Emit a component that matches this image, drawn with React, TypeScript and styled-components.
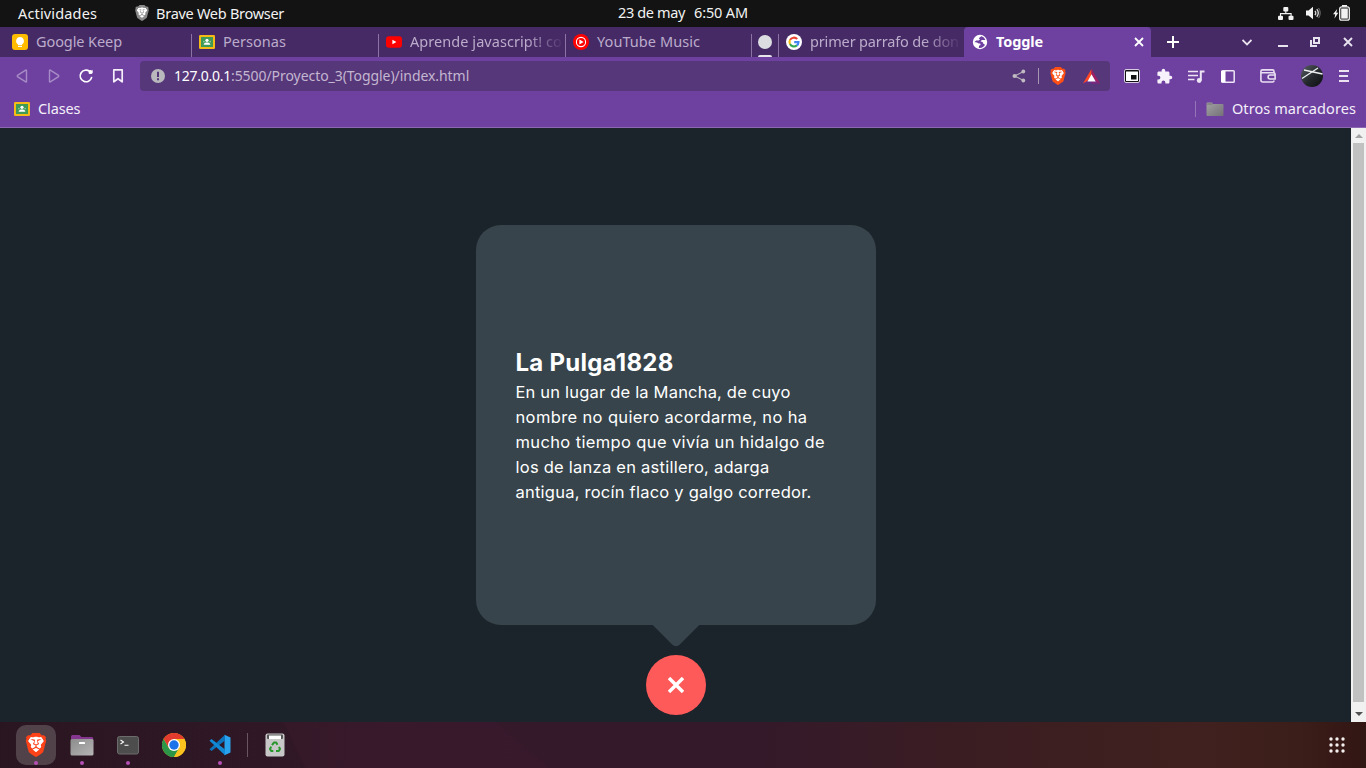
import React from 'react';
import styled, { createGlobalStyle, css } from 'styled-components';
import { SiBrave } from 'react-icons/si';

const uiFont = '"Noto Sans", "Open Sans", sans-serif';

const GlobalStyle = createGlobalStyle`
  * { box-sizing: border-box; }
  body { margin: 0; background: #1c242b; overflow: hidden; }
  svg { display: block; flex: none; }
  h1, p { margin: 0; }
`;

const Desktop = styled.div`
  width: 1366px;
  height: 768px;
  display: flex;
  flex-direction: column;
  font: 14.5px/20px ${uiFont};
  color: #fff;
  overflow: hidden;
`;

const Label = styled.span<{ $track?: number }>`
  white-space: nowrap;
  letter-spacing: ${(p) => p.$track ?? 0}px;
`;

/* ---------- system bar ---------- */
const SystemBar = styled.header`
  flex: 0 0 27px;
  display: grid;
  grid-template-columns: 618px 1fr auto;
  align-items: center;
  background: #131313;
  color: #f2f2f2;
`;
const SystemMenu = styled.div`
  display: flex;
  align-items: center;
  padding: 0 0 2px 18px;
`;
const FocusedApp = styled.div`
  display: flex;
  align-items: center;
  gap: 6px;
  margin-left: 37px;
`;
const Clock = styled.div`
  display: flex;
  gap: 9px;
  margin-top: -3px;
`;
const Tray = styled.div`
  display: flex;
  align-items: center;
  gap: 12px;
  padding: 0 16px 1px 0;
`;

/* ---------- tab strip ---------- */
const TabStrip = styled.nav`
  flex: 0 0 30px;
  display: flex;
  align-items: center;
  background: #462a66;
  padding-right: 2px;
`;
const Tab = styled.div<{ $width: number; $active?: boolean; $inset?: number; $divider?: boolean }>`
  flex: 0 0 ${(p) => p.$width}px;
  height: 30px;
  display: flex;
  align-items: center;
  gap: 8px;
  padding: 0 2px 0 ${(p) => p.$inset ?? 7}px;
  color: #bcaccb;
  position: relative;
  ${(p) => p.$active && css`
    background: #6e41a1;
    color: #fff;
    font-weight: 700;
    border-radius: 4px 4px 0 0;
    padding-right: 7px;
  `}
  ${(p) => p.$divider && css`
    background: linear-gradient(#8b74a3, #8b74a3) right bottom / 1px 23px no-repeat;
  `}
`;
const TabTitle = styled(Label)<{ $fade?: boolean }>`
  flex: 1;
  min-width: 0;
  margin-top: -2px;
  ${(p) => p.$fade && css`mask-image: linear-gradient(to right, #000 calc(100% - 38px), transparent);`}
`;
const PinnedDot = styled.span`
  width: 14px;
  height: 14px;
  border-radius: 50%;
  background: #dcdde1;
`;
const PinnedMark = styled.span`
  position: absolute;
  left: 6px;
  bottom: 0;
  width: 14px;
  height: 2px;
  border-radius: 2px 2px 0 0;
  background: #e8e4ec;
`;

const Slot = styled.span<{ $width?: number; $before?: number }>`
  flex: 0 0 ${(p) => p.$width ?? 32}px;
  display: flex;
  justify-content: center;
  align-items: center;
  margin-left: ${(p) => p.$before ?? 0}px;
`;
const WindowControls = styled.div`
  display: flex;
  align-items: center;
  margin-left: auto;
`;

/* ---------- toolbar ---------- */
const Toolbar = styled.div`
  flex: 0 0 38px;
  display: flex;
  align-items: center;
  background: #6e41a1;
  padding: 0 6px;
`;
const AddressBar = styled.div`
  flex: 0 0 970px;
  height: 30px;
  margin: 0 6px;
  display: flex;
  align-items: center;
  padding: 0 3px 0 11px;
  border-radius: 4px;
  background: #563779;
  font-size: 14px;
  color: #c3b6d0;
`;
const Host = styled(Label)`
  margin-left: 9px;
  color: #fff;
`;
const AddressActions = styled.div`
  display: flex;
  align-items: center;
  margin-left: auto;
`;
const Divider = styled.span<{ $h: number; $color: string }>`
  width: 1px;
  height: ${(p) => p.$h}px;
  background: ${(p) => p.$color};
`;
const ShareDivider = styled(Divider)`
  margin: 0 3px;
`;
const BookmarksBar = styled.div`
  flex: 0 0 33px;
  display: flex;
  align-items: center;
  justify-content: space-between;
  padding: 0 10px 4px 14px;
  background: #6e41a1;
  border-bottom: 1px solid #8b67b4;
  color: #f4eff8;
`;
const Bookmark = styled.div`
  display: flex;
  align-items: center;
  gap: 8px;
`;
const BookmarkName = styled(Label)`
  margin-top: -2px;
`;
const OtherBookmarks = styled(Bookmark)`
  & > :first-child { margin-right: 2px; }
`;

/* ---------- page ---------- */
const Viewport = styled.div`
  flex: 0 0 594px;
  display: flex;
  background: #1c242b;
`;
const Page = styled.main`
  flex: 1;
  display: flex;
  flex-direction: column;
  align-items: center;
  padding-top: 97px;
`;
const Card = styled.section`
  position: relative;
  width: 400px;
  height: 400px;
  padding: 0 40px;
  display: flex;
  flex-direction: column;
  justify-content: center;
  border-radius: 25px;
  background: #37444b;
  font-family: Inter, "Open Sans", sans-serif;
  &::after {
    content: '';
    position: absolute;
    left: 180px;
    bottom: -15px;
    width: 40px;
    height: 40px;
    border-radius: 5px;
    background: #37444b;
    transform: rotate(45deg);
  }
`;
const CardTitle = styled.h1`
  font-size: 24px;
  line-height: 36px;
  font-weight: 700;
  letter-spacing: 0.25px;
`;
const CardText = styled.p`
  && { margin: -1px 0 1px; }
  font-size: 16.5px;
  line-height: 25px;
  display: flex;
  flex-direction: column;
`;
const ToggleButton = styled.button`
  width: 60px;
  height: 60px;
  margin-top: 30px;
  padding: 0;
  border: 0;
  border-radius: 50%;
  display: flex;
  align-items: center;
  justify-content: center;
  background: #ff5a5a;
`;
const Scrollbar = styled.div`
  flex: 0 0 15px;
  display: flex;
  flex-direction: column;
  align-items: center;
  background: #f1f1f1;
`;
const ScrollArrow = styled.span`
  flex: 0 0 15px;
  display: flex;
  align-items: center;
`;
const ScrollThumb = styled.span`
  width: 11px;
  height: 559px;
  margin-bottom: 4px;
  background: #c1c1c1;
`;

/* ---------- dock ---------- */
const Dock = styled.footer`
  flex: 0 0 46px;
  display: flex;
  align-items: center;
  padding: 0 6px 0 13px;
  background:
    linear-gradient(64.4deg, rgba(16, 14, 20, 0.12) 0 275px, transparent 276px) no-repeat,
    linear-gradient(40deg, rgba(80, 20, 60, 0.1) 0 353px, transparent 354px) no-repeat,
    linear-gradient(90deg, #291720 0, #311925 260px, #351a2a 400px, #34192a 560px, #34192a 760px, #3a1d22 960px, #40211f 1200px, #3b1d19 1300px, #321613 1366px);
`;
const DockItem = styled.div`
  position: relative;
  flex: 0 0 46px;
  height: 46px;
  display: flex;
  align-items: center;
  justify-content: center;
`;
const DockTile = styled.span<{ $focused?: boolean }>`
  width: 40px;
  height: 40px;
  display: flex;
  align-items: center;
  justify-content: center;
  border-radius: 10px;
  background: ${(p) => (p.$focused ? '#51424a' : 'transparent')};
`;
const RunningDot = styled.span`
  position: absolute;
  left: 21px;
  bottom: 3px;
  width: 4px;
  height: 4px;
  border-radius: 50%;
  background: #b44fb5;
`;
const DockDivider = styled(Divider)`
  margin: 0 4px;
`;
const AppsButton = styled.div`
  width: 46px;
  display: flex;
  justify-content: center;
  margin-left: auto;
`;

/* ---------- drawings ---------- */
const Lion = ({ size, fill, face }: { size: number; fill: string; face: string }) => (
  <svg width={size} height={size} viewBox="0 0 24 24">
    <path d="M6 4 L12 2.6 L18 4 L20 8 L17 18 L12 21 L7 18 L4 8Z" fill={face} />
    <SiBrave size={24} color={fill} />
  </svg>
);
const KeepIcon = () => (
  <svg width="16" height="16" viewBox="0 0 16 16">
    <rect width="16" height="16" rx="3" fill="#fb0" />
    <path d="M8 3a4 4 0 0 0-2 7.4V11h4v-.6A4 4 0 0 0 8 3zM6 11.8h4V13H6z" fill="#fff" />
  </svg>
);
const ClassroomIcon = () => (
  <svg width="16" height="14" viewBox="0 0 16 14">
    <rect width="16" height="14" rx="1.2" fill="#f6bb14" />
    <rect x="2" y="2" width="12" height="10" fill="#3f9a55" />
    <circle cx="8" cy="5.3" r="1.6" fill="#fff" />
    <path d="M4.6 9.8c0-1.8 2-2.3 3.4-2.3s3.4.5 3.4 2.3z" fill="#fff" />
    <circle cx="4.9" cy="6.6" r=".9" fill="#8bc79a" />
    <circle cx="11.1" cy="6.6" r=".9" fill="#8bc79a" />
  </svg>
);
const YouTubeIcon = () => (
  <svg width="16" height="16" viewBox="0 0 16 16">
    <rect y="2.2" width="16" height="11.6" rx="3" fill="#f00" />
    <path d="M6.4 5.8v4.4L10.4 8z" fill="#fff" />
  </svg>
);
const YouTubeMusicIcon = () => (
  <svg width="16" height="16" viewBox="0 0 16 16">
    <circle cx="8" cy="8" r="8" fill="#f00" />
    <circle cx="8" cy="8" r="4.6" fill="none" stroke="#fff" strokeWidth="1.1" />
    <path d="M6.4 5.5v5L10.6 8z" fill="#fff" />
  </svg>
);
const GoogleIcon = () => (
  <svg width="16" height="16" viewBox="0 0 16 16">
    <circle cx="8" cy="8" r="8" fill="#fff" />
    <g fill="none" strokeWidth="2.1">
      <path d="M11.2 5A4.5 4.5 0 0 0 4 6" stroke="#ea4335" />
      <path d="M4 6a4.5 4.5 0 0 0 0 4" stroke="#fbbc05" />
      <path d="M4 10a4.5 4.5 0 0 0 6.9 1.4" stroke="#34a853" />
      <path d="M10.9 11.4A4.5 4.5 0 0 0 12.5 8.1H8.2" stroke="#4285f4" />
    </g>
  </svg>
);
const GlobeIcon = () => (
  <svg width="16" height="16" viewBox="0 0 16 16">
    <circle cx="8" cy="8" r="7.2" fill="#fff" />
    <path d="M9.2 2.2 6.8 4.2 8 5.4 6.6 6.6H4.2L2.4 8l2.6.4 1.6 1.2h1.6l.4 1.4-1.6.8-.2 2.2c3 .4 5.2-1 6.2-3.200L11.400 9.800l-.8-1.900-2-.5L9.800 6h3.600C12.700 4 11.300 2.700 9.200 2.200z" fill="#6e41a1" />
  </svg>
);
const Cross = ({ size, color, width }: { size: number; color: string; width: number }) => (
  <svg width={size} height={size} viewBox={`0 0 ${size} ${size}`} stroke={color} strokeWidth={width}>
    <path d={`M1 1L${size - 1} ${size - 1}M${size - 1} 1L1 ${size - 1}`} />
  </svg>
);
const Triangle = ({ flip }: { flip?: boolean }) => (
  <svg width="14" height="16" viewBox="0 0 14 16">
    <path
      d={flip ? 'M2.5 2.6v10.8q0 .9.8.5l8.200-5.300q.6-.6 0-1.200L3.300 2.100q-.8-.4-.8.5z' : 'M11.500 2.600v10.800q0 .9-.8.5L2.500 8.600q-.6-.6 0-1.200l8.200-5.300q.8-.4.8.5z'}
      fill="none" stroke="#a78bc6" strokeWidth="1.4"
    />
  </svg>
);
const ReloadIcon = () => (
  <svg width="16" height="16" viewBox="0 0 16 16">
    <path d="M11.600 3.400A5.800 5.800 0 1 0 13.600 9.500" fill="none" stroke="#fff" strokeWidth="1.600" strokeLinecap="round" />
    <path d="M10.500 5.800h2.700q1.400 0 1.400-1.400V1.800z" fill="#fff" />
    <circle cx="12.400" cy="4" r="1.900" fill="#fff" />
  </svg>
);
const BookmarkIcon = () => (
  <svg width="12" height="16" viewBox="0 0 12 16">
    <path d="M1.800 1.800h8.400v12L6 10.700l-4.200 3.100z" fill="none" stroke="#f4eff8" strokeWidth="1.700" strokeLinejoin="round" />
  </svg>
);
const InfoIcon = () => (
  <svg width="14" height="14" viewBox="0 0 14 14">
    <circle cx="7" cy="7" r="7" fill="#b9b9bd" />
    <path d="M6 2.800h2V8H6zM6 9.300h2v2H6z" fill="#563779" />
  </svg>
);
const ShareIcon = () => (
  <svg width="14" height="14" viewBox="0 0 14 14">
    <path d="M11.500 2.500 2.800 7l8.700 4.500" fill="none" stroke="#b5b0b8" strokeWidth="1.300" />
    <g fill="#c0bbc3"><circle cx="11.300" cy="2.500" r="1.900" /><circle cx="2.600" cy="7" r="2.100" /><circle cx="11.300" cy="11.500" r="1.900" /></g>
  </svg>
);
const BatIcon = () => (
  <svg width="17" height="15" viewBox="0 0 17 15">
    <path d="M8.500 0 0 14.500l8.500-4z" fill="#ff4724" />
    <path d="M8.500 0 17 14.500H8.500z" fill="#9e1f63" />
    <path d="M0 14.500h17L8.500 9z" fill="#662d91" opacity=".7" />
    <path d="M8.500 5.200 4.500 12.500h8.200z" fill="#fff" />
  </svg>
);
const PipIcon = () => (
  <svg width="16" height="14" viewBox="0 0 16 14">
    <rect x=".5" y=".5" width="15" height="13" rx="1.500" fill="#111" stroke="#d8cde3" />
    <rect x="2" y="2.500" width="12" height="9.500" fill="#fff" />
    <rect x="7" y="6" width="5.500" height="4.500" fill="#111" />
  </svg>
);
const PuzzleIcon = () => (
  <svg width="17" height="17" viewBox="0 0 24 24">
    <path fill="#f6f1fa" d="M20.500 11H19V7c0-1.100-.9-2-2-2h-4V3.500a2.500 2.500 0 0 0-5 0V5H4c-1.100 0-2 .9-2 2v3.800h1.500a2.700 2.700 0 0 1 0 5.400H2V20c0 1.100.9 2 2 2h3.800v-1.500a2.700 2.700 0 0 1 5.400 0V22H17c1.100 0 2-.9 2-2v-4h1.500a2.500 2.500 0 0 0 0-5z" />
  </svg>
);
const QueueIcon = () => (
  <svg width="17" height="13" viewBox="0 0 17 13">
    <path d="M0 1.500h10M0 5.500h10M0 9.500h6.500" stroke="#ede5f4" strokeWidth="1.700" />
    <path d="M12.800 10.500V1.500H16.500" fill="none" stroke="#ede5f4" strokeWidth="2" />
    <circle cx="11.200" cy="10.500" r="2.400" fill="#ede5f4" />
  </svg>
);
const SidebarIcon = () => (
  <svg width="14" height="13" viewBox="0 0 14 13">
    <rect x=".8" y=".8" width="12.400" height="11.400" rx=".8" fill="none" stroke="#ede5f4" strokeWidth="1.500" />
    <rect x="0" y="1" width="4.500" height="11" fill="#fff" />
  </svg>
);
const WalletIcon = () => (
  <svg width="16" height="14" viewBox="0 0 16 14" fill="none" stroke="#eadff2" strokeWidth="1.600">
    <path d="M14 4V2.500Q14 .9 12.500.9H2.500Q.9.9.9 2.500v8.500q0 2 2 2h9.600q1.500 0 1.500-1.500M1 3.800h12.300q1.800 0 1.800 1.200v5h-5a2 2 0 0 1 0-4h5" />
  </svg>
);
const Avatar = () => (
  <svg width="22" height="22" viewBox="0 0 22 22">
    <defs><linearGradient id="orb" x1="0" y1="0" x2="1" y2="1"><stop offset="0" stopColor="#5a6068" /><stop offset=".55" stopColor="#23272b" /><stop offset="1" stopColor="#0c0d10" /></linearGradient></defs>
    <circle cx="11" cy="11" r="11" fill="url(#orb)" />
    <path d="M1 13.500 17 3M3 5l18.500 4" stroke="#eceff0" strokeWidth="1.300" fill="none" />
  </svg>
);
const MenuIcon = () => (
  <svg width="10" height="12" viewBox="0 0 10 12"><path d="M0 1h10M0 6h9M0 11h10" stroke="#eae1f2" strokeWidth="2" /></svg>
);
const FolderIcon = () => (
  <svg width="18" height="15" viewBox="0 0 18 15">
    <defs><linearGradient id="fold" x1="0" y1="0" x2="1" y2="1"><stop offset="0" stopColor="#a3a3a3" /><stop offset="1" stopColor="#747078" /></linearGradient></defs>
    <path d="M.5 1.500Q.5.500 1.500.500h4.500l1 1.500h9.500q1 0 1 1v10q0 1-1 1h-15q-1 0-1-1z" fill="url(#fold)" />
    <path d="M1 2h5.500" stroke="#737373" />
  </svg>
);
const NetworkIcon = () => (
  <svg width="16" height="13" viewBox="0 0 16 13" fill="#f2f2f2">
    <rect x="5.300" y="0" width="5" height="4.500" rx="1" /><rect x="0" y="8.700" width="5" height="4.200" rx="1" /><rect x="10.500" y="8.700" width="5" height="4.200" rx="1" />
    <path d="M7.800 4v2.600M2.500 9V6.600h10.600V9" fill="none" stroke="#f2f2f2" strokeWidth="1.100" />
  </svg>
);
const VolumeIcon = () => (
  <svg width="15" height="14" viewBox="0 0 15 14">
    <path d="M0 4.500h2.500L7 .8v12.400L2.500 9.500H0z" fill="#f2f2f2" />
    <path d="M9 4.800q1.600 2.200 0 4.400M10.800 3.200q3 3.800 0 7.600" fill="none" stroke="#d6d6d6" strokeWidth="1.300" />
    <path d="M12.600 2q3.200 5 0 10" fill="none" stroke="#777" strokeWidth="1" />
  </svg>
);
const BatteryIcon = () => (
  <svg width="17" height="16" viewBox="0 0 17 16">
    <path d="M4.200 4 0 9.300h2.200L1.500 13.500 5.300 7.700H3.300z" fill="#f2f2f2" />
    <rect x="6.700" y="1.900" width="9.600" height="13.300" rx="2" fill="none" stroke="#f2f2f2" strokeWidth="1.300" />
    <rect x="9" y="0" width="5" height="1.700" fill="#f2f2f2" /><rect x="8.200" y="3.500" width="6.600" height="10.100" fill="#f2f2f2" />
  </svg>
);
const FilesIcon = () => (
  <svg width="24" height="24" viewBox="0 0 24 24">
    <defs><linearGradient id="files" x1="0" y1="0" x2="1" y2="1"><stop offset="0" stopColor="#8c8c8c" /><stop offset="1" stopColor="#b5b5b5" /></linearGradient></defs>
    <path d="M1 3.500Q1 2 2.500 2h7l2 2H22q1.200 0 1.200 1.500V12H1z" fill="#85378f" />
    <rect x=".5" y="6" width="23" height="16.500" rx="1.500" fill="url(#files)" />
    <rect x="9" y="9" width="6" height="2" rx=".5" fill="#fff" />
  </svg>
);
const TerminalIcon = () => (
  <svg width="22" height="19" viewBox="0 0 22 19">
    <rect x=".5" y=".5" width="21" height="17.500" rx="2" fill="#4d4d4d" stroke="#6c6c6c" />
    <path d="M3.500 4 6.500 6l-3 2M7.500 9.300h4" fill="none" stroke="#fff" strokeWidth="1.100" />
  </svg>
);
const ChromeIcon = () => (
  <svg width="24" height="24" viewBox="0 0 24 24">
    <circle cx="12" cy="12" r="12" fill="#fcc31e" />
    <path d="M12 12 6.800 15 1.600 6A12 12 0 0 1 22.400 6H12z" fill="#e33b2e" />
    <path d="M1.600 6A12 12 0 0 0 12 24l5.200-9L12 12l-5.200 3z" fill="#2b9648" />
    <path d="M22.400 6A12 12 0 0 1 12 24l5.200-9L12 6z" fill="#fcc31e" />
    <circle cx="12" cy="12" r="6" fill="#fff" /><circle cx="12" cy="12" r="4.700" fill="#1a73e8" />
  </svg>
);
const CodeIcon = () => (
  <svg width="22" height="22" viewBox="0 0 22 22">
    <path d="M15.500.8 21.500 3.500v15L15.500 21.200z" fill="#29a3ee" />
    <path d="M16 .8v5.700L2.500 17 .5 15.200z" fill="#0b74bd" />
    <path d="M16 21.200v-5.700L2.500 5 .5 6.800z" fill="#1289d4" />
  </svg>
);
const TrashIcon = () => (
  <svg width="20" height="24" viewBox="0 0 20 24">
    <rect x=".5" y=".5" width="19" height="23" rx="2" fill="#c7c7c7" />
    <rect x="2" y="1.500" width="16" height="4.500" rx="1" fill="#555" /><path d="M4 2.500h12V6H4z" fill="#fff" />
    <g fill="none" stroke="#27962b" strokeWidth="2" strokeLinejoin="round">
      <path d="M7 12.200 8.900 9.600h2.300l1.300 2.200M14 13.800l1 2.200-1.200 2H11M8.300 18H6.200L5 16l1.200-2.400" />
    </g>
  </svg>
);
const AppsIcon = () => (
  <svg width="16" height="16" viewBox="0 0 16 16" fill="#f4efee">
    {[2, 8, 14].map((y) => [2, 8, 14].map((x) => <circle key={`${x}-${y}`} cx={x} cy={y} r="1.700" />))}
  </svg>
);

const quote: [string, number][] = [
  ['En un lugar de la Mancha, de cuyo', 0.188],
  ['nombre no quiero acordarme, no ha', 0.37],
  ['mucho tiempo que vivía un hidalgo de', 0.37],
  ['los de lanza en astillero, adarga', 0.246],
  ['antigua, rocín flaco y galgo corredor.', 0.234],
];

export default function App() {
  return (
    <Desktop>
      <GlobalStyle />
      <SystemBar>
        <SystemMenu>
          <Label $track={0.15}>Actividades</Label>
          <FocusedApp>
            <Lion size={16} fill="#8a8a8a" face="#fff" />
            <Label $track={-0.28}>Brave Web Browser</Label>
          </FocusedApp>
        </SystemMenu>
        <Clock>
          <Label $track={-0.37}>23 de may</Label>
          <Label $track={-0.14}>6:50 AM</Label>
        </Clock>
        <Tray><NetworkIcon /><VolumeIcon /><BatteryIcon /></Tray>
      </SystemBar>

      <TabStrip>
        <Tab $width={192} $inset={12} $divider><KeepIcon /><TabTitle $track={-0.09}>Google Keep</TabTitle></Tab>
        <Tab $width={187} $divider><ClassroomIcon /><TabTitle $track={0.04}>Personas</TabTitle></Tab>
        <Tab $width={187} $divider><YouTubeIcon /><TabTitle $track={0.06} $fade>Aprende javascript! co</TabTitle></Tab>
        <Tab $width={186} $divider><YouTubeMusicIcon /><TabTitle $track={0.07}>YouTube Music</TabTitle></Tab>
        <Tab $width={27} $inset={6} $divider><PinnedDot /><PinnedMark /></Tab>
        <Tab $width={185}><GoogleIcon /><TabTitle $track={-0.15} $fade>primer parrafo de don</TabTitle></Tab>
        <Tab $width={187} $inset={8} $active>
          <GlobeIcon /><TabTitle $track={-0.12}>Toggle</TabTitle><Cross size={10} color="#fff" width={1.8} />
        </Tab>
        <Slot $width={44}>
          <svg width="12" height="12" viewBox="0 0 12 12"><path d="M6 0v12M0 6h12" stroke="#fff" strokeWidth="2" /></svg>
        </Slot>
        <WindowControls>
          <Slot><svg width="10" height="7" viewBox="0 0 10 7"><path d="M.5 1 5 5.500 9.500 1" fill="none" stroke="#e8e2ee" strokeWidth="1.800" /></svg></Slot>
          <Slot $before={4}><svg width="10" height="10" viewBox="0 0 10 10"><path d="M0 9h10" stroke="#e8e2ee" strokeWidth="2" /></svg></Slot>
          <Slot><svg width="10" height="10" viewBox="0 0 10 10" fill="none" stroke="#e8e2ee" strokeWidth="2"><path d="M4 1h5v5H4zM1 3v6H7" /></svg></Slot>
          <Slot $before={1}><Cross size={10} color="#e8e2ee" width={1.9} /></Slot>
        </WindowControls>
      </TabStrip>

      <Toolbar>
        <Slot><Triangle /></Slot>
        <Slot><Triangle flip /></Slot>
        <Slot><ReloadIcon /></Slot>
        <Slot><BookmarkIcon /></Slot>
        <AddressBar>
          <InfoIcon />
          <Host $track={-0.26}>127.0.0.1</Host>
          <Label $track={-0.06}>:5500/Proyecto_3(Toggle)/index.html</Label>
          <AddressActions>
            <Slot><ShareIcon /></Slot>
            <ShareDivider $h={16} $color="#a597b3" />
            <Slot><Lion size={18} fill="#ff4f14" face="#fff" /></Slot>
            <Slot $before={1}><BatIcon /></Slot>
          </AddressActions>
        </AddressBar>
        <Slot><PipIcon /></Slot>
        <Slot><PuzzleIcon /></Slot>
        <Slot><QueueIcon /></Slot>
        <Slot><SidebarIcon /></Slot>
        <Slot $before={8}><WalletIcon /></Slot>
        <Slot $before={12}><Avatar /></Slot>
        <Slot><MenuIcon /></Slot>
      </Toolbar>

      <BookmarksBar>
        <Bookmark><ClassroomIcon /><BookmarkName $track={-0.12}>Clases</BookmarkName></Bookmark>
        <OtherBookmarks>
          <Divider $h={16} $color="#9476b8" />
          <FolderIcon />
          <BookmarkName $track={0.08}>Otros marcadores</BookmarkName>
        </OtherBookmarks>
      </BookmarksBar>

      <Viewport>
        <Page>
          <Card>
            <CardTitle>La Pulga1828</CardTitle>
            <CardText>
              {quote.map(([line, track]) => <Label key={line} $track={track}>{line}</Label>)}
            </CardText>
          </Card>
          <ToggleButton aria-label="Cerrar"><Cross size={16} color="#fff" width={3.4} /></ToggleButton>
        </Page>
        <Scrollbar>
          <ScrollArrow><svg width="8" height="4" viewBox="0 0 8 4"><path d="M4 0 8 4H0z" fill="#a3a3a3" /></svg></ScrollArrow>
          <ScrollThumb />
          <ScrollArrow><svg width="8" height="4" viewBox="0 0 8 4"><path d="M4 4 8 0H0z" fill="#505050" /></svg></ScrollArrow>
        </Scrollbar>
      </Viewport>

      <Dock>
        <DockItem><DockTile $focused><Lion size={24} fill="#fb4218" face="#fff" /></DockTile><RunningDot /></DockItem>
        <DockItem><DockTile><FilesIcon /></DockTile><RunningDot /></DockItem>
        <DockItem><DockTile><TerminalIcon /></DockTile><RunningDot /></DockItem>
        <DockItem><DockTile><ChromeIcon /></DockTile></DockItem>
        <DockItem><DockTile><CodeIcon /></DockTile><RunningDot /></DockItem>
        <DockDivider $h={24} $color="#6a5661" />
        <DockItem><DockTile><TrashIcon /></DockTile></DockItem>
        <AppsButton><AppsIcon /></AppsButton>
      </Dock>
    </Desktop>
  );
}
